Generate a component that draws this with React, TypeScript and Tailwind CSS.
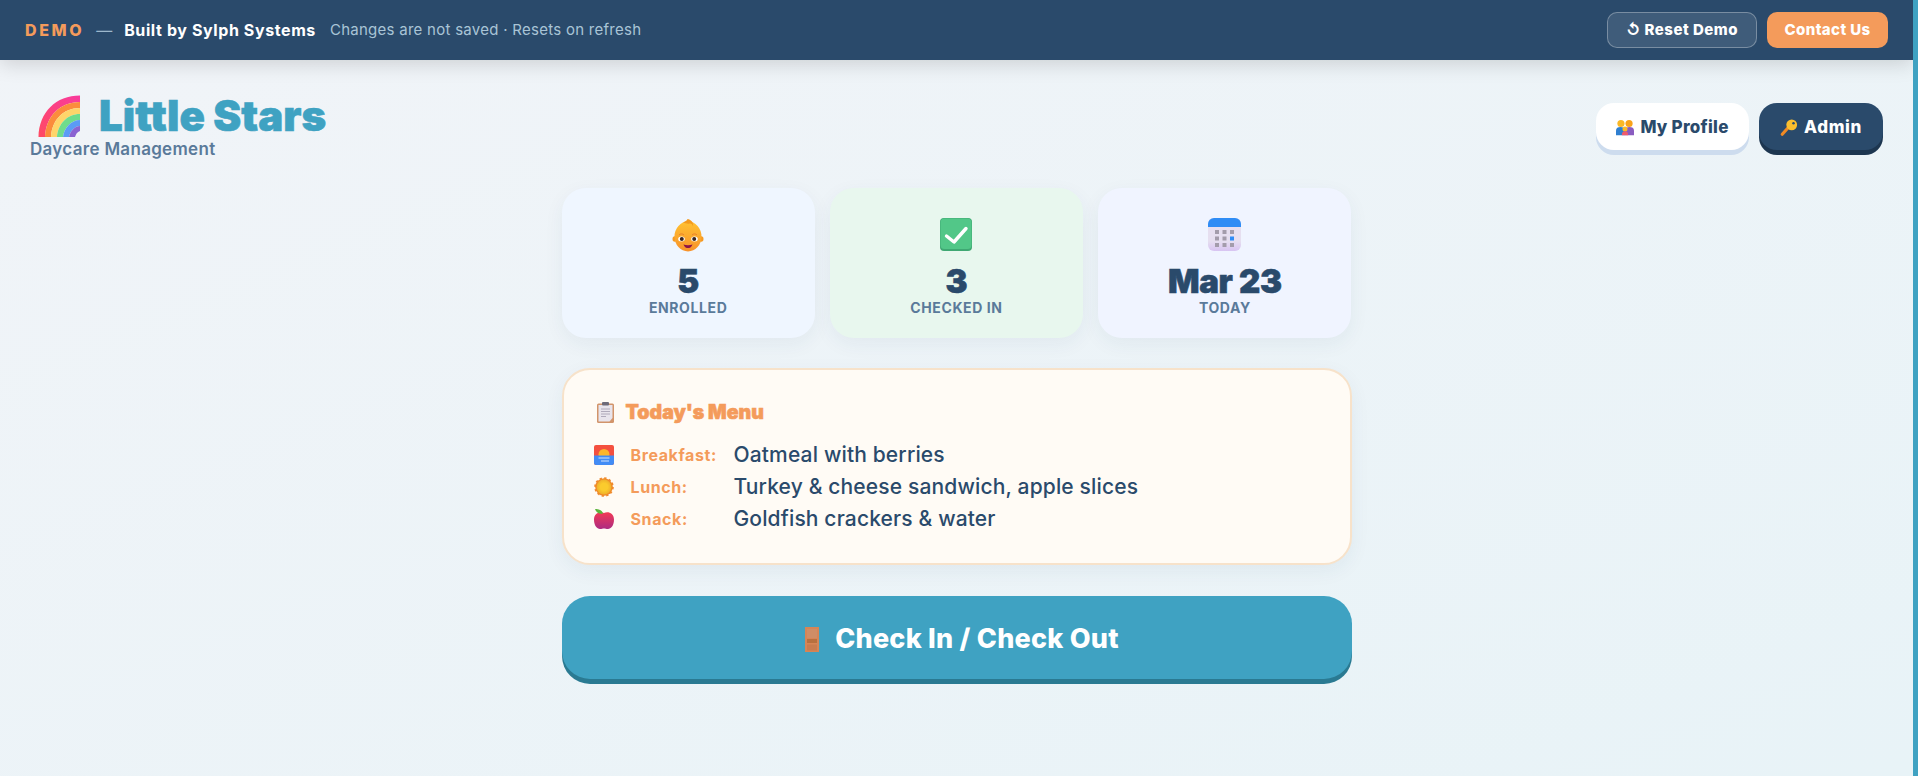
import React from "react";

const headFont = "font-['Inter',sans-serif] font-black [-webkit-text-stroke:0.6px_currentColor]";

const Rainbow = () => (
  <svg viewBox="0 0 42 42" className="w-[42px] h-[42px] shrink-0">
    <defs>
      <linearGradient id="rb" x1="1" y1="0" x2="0" y2="1">
        <stop offset="0" stopColor="#f83a9e" />
        <stop offset="1" stopColor="#ff4a62" />
      </linearGradient>
    </defs>
    <path d="M42 0.5C18 0.5 1 17 0.5 42H7C8 21 22 7 42 7Z" fill="url(#rb)" />
    <path d="M42 7C22 7 8 21 7 42H13C14 25 25 13 42 13Z" fill="#fb8c3c" />
    <path d="M42 13C25 13 14 25 13 42H19C20 29 29 19 42 19Z" fill="#ffd56a" />
    <path d="M42 19C29 19 20 29 19 42H25C26 33 33 25 42 25Z" fill="#6fdc8c" />
    <path d="M42 25C33 25 26 33 25 42H31C32 37 36 31 42 31Z" fill="#5b9bf5" />
    <path d="M42 31C36 31 32 37 31 42H37C38 39 39 37 42 36Z" fill="#8a63d2" />
  </svg>
);

const Couple = () => (
  <svg viewBox="0 0 20 20" className="w-[18px] h-[18px]">
    <circle cx="5.500" cy="5" r="4" fill="#fbb826" />
    <circle cx="14.500" cy="5" r="4" fill="#f9a21a" />
    <path d="M0 18v-5c0-3 2-4 5-4s5 1 5 4v5Z" fill="#2f7fd0" />
    <path d="M10 18v-5c0-3 2-4 5-4s5 1 5 4v5Z" fill="#8a5cc0" />
    <circle cx="10" cy="11" r="2.800" fill="#fbb826" />
    <path d="M6.500 18c0-3 1-4.500 3.500-4.500s3.500 1.500 3.500 4.500Z" fill="#ef5b6e" />
  </svg>
);

const Key = () => (
  <svg viewBox="0 0 20 20" className="w-[18px] h-[18px]">
    <path d="M10.500 8 2.500 17" stroke="#f08a24" strokeWidth="3.500" strokeLinecap="round" />
    <circle cx="13" cy="6.500" r="6" fill="#fcbf2d" />
    <circle cx="15" cy="4.800" r="1.400" fill="#2a4a6b" />
  </svg>
);

const Baby = () => (
  <svg viewBox="0 0 32 34" className="w-8 h-[34px]">
    <defs>
      <linearGradient id="babyFace" x1="0" y1="0" x2="0" y2="1">
        <stop offset="0" stopColor="#ffc132" />
        <stop offset="1" stopColor="#f8922a" />
      </linearGradient>
    </defs>
    <ellipse cx="2.800" cy="21" rx="2.300" ry="2.800" fill="#f59a23" />
    <ellipse cx="29.200" cy="21" rx="2.300" ry="2.800" fill="#f59a23" />
    <ellipse cx="16" cy="18.500" rx="13.500" ry="15" fill="url(#babyFace)" />
    <path d="M11 4.500C14 3 15 2.500 15.500 1c3 .5 6.500 3 5.500 7.500-.5-2.500-2-3.500-3.500-3-1.500.5-4 0-6.500-1Z" fill="#f39a1f" />
    <path d="M7 17c1.500-1.500 3.500-1.500 5 0M20 17c1.500-1.500 3.500-1.500 5 0" fill="none" stroke="#e67c2a" strokeWidth="0.900" />
    <ellipse cx="9.500" cy="21" rx="3.300" ry="2.500" fill="#fff" />
    <ellipse cx="22.500" cy="21" rx="3.300" ry="2.500" fill="#fff" />
    <circle cx="9.800" cy="21" r="2" fill="#3a2520" />
    <circle cx="22.200" cy="21" r="2" fill="#3a2520" />
    <path d="M11.500 26.500c2.500 1 6.500 1 9 0-1 3-3 3.500-4.500 3.500s-3.500-.5-4.500-3.500Z" fill="#8e1446" />
  </svg>
);

const Check = () => (
  <svg viewBox="0 0 32 33" className="w-8 h-[33px]">
    <rect width="32" height="33" rx="4" fill="#3fa873" />
    <rect x="0.500" y="0.500" width="31" height="30.500" rx="4" fill="#52c788" />
    <path d="M6.500 18 14 24 26 10.500" fill="none" stroke="#fff" strokeWidth="3.400" strokeLinecap="round" strokeLinejoin="round" />
  </svg>
);

const Calendar = () => (
  <svg viewBox="0 0 33 33" className="w-[33px] h-[33px]">
    <defs>
      <linearGradient id="calBody" x1="0" y1="0" x2="0" y2="1">
        <stop offset="0.700" stopColor="#e6dff0" />
        <stop offset="1" stopColor="#d8c4f2" />
      </linearGradient>
    </defs>
    <rect width="33" height="33" rx="6" fill="url(#calBody)" />
    <path d="M0 9V6a6 6 0 0 1 6-6h21a6 6 0 0 1 6 6v3Z" fill="#2f8cf5" />
    {[7, 14.500, 22].map((x) =>
      [12, 18.500, 25].map((y) => (
        <rect key={`${x}-${y}`} x={x} y={y} width="4" height="4" fill={x === 22 && y === 18.500 ? "#2f8cf5" : "#a39cab"} />
      )),
    )}
  </svg>
);

const Clipboard = () => (
  <svg viewBox="0 0 17 21" className="w-[17px] h-[21px]">
    <rect x="0" y="1.500" width="17" height="19.500" rx="1.500" fill="#d2946a" />
    <path d="M1.500 3h14v13l-3 3.500h-11Z" fill="#e8e4ec" />
    <rect x="5" y="0" width="7" height="3.500" rx="1" fill="#6d6a78" />
    <path d="M4 7h9M4 9.500h9M4 12h9M4 14.500h5" stroke="#a9a3b5" strokeWidth="0.900" />
  </svg>
);

const Sunrise = () => (
  <svg viewBox="0 0 20 20" className="w-5 h-5">
    <rect width="20" height="20" rx="2" fill="#f4503f" />
    <circle cx="10" cy="9.500" r="5.500" fill="#fcb62b" />
    <path d="M0 10.500h20V18a2 2 0 0 1-2 2H2a2 2 0 0 1-2-2Z" fill="#428cf5" />
    <path d="M4.500 13h11M7 16h8" stroke="#cfe2fc" strokeWidth="1" />
  </svg>
);

const Sun = () => (
  <svg viewBox="0 0 20 20" className="w-5 h-5">
    <defs>
      <radialGradient id="sunCore">
        <stop offset="0.500" stopColor="#fbcb2d" />
        <stop offset="1" stopColor="#efb02b" />
      </radialGradient>
    </defs>
    <circle cx="10" cy="10" r="8.800" fill="#f08a2a" stroke="#f08a2a" strokeWidth="2" strokeDasharray="2.300 2.300" />
    <circle cx="10" cy="10" r="7.400" fill="url(#sunCore)" />
  </svg>
);

const Apple = () => (
  <svg viewBox="0 0 20 20" className="w-5 h-5">
    <defs>
      <linearGradient id="appleBody" x1="0" y1="0" x2="0" y2="1">
        <stop offset="0" stopColor="#f23a55" />
        <stop offset="1" stopColor="#ad2b82" />
      </linearGradient>
    </defs>
    <path d="M10 4c3-1.800 10-1 10 6.500 0 6-3 9.500-6 9.500-2 0-2.500-.5-4-.5S8 20 6 20c-3 0-6-3.500-6-9.500C0 3 7 2.200 10 4Z" fill="url(#appleBody)" />
    <path d="M1 0c3.500 0 7 1 8 4.500C6 5.500 2 4 1 0Z" fill="#5ab53c" />
  </svg>
);

const Door = () => (
  <svg viewBox="0 0 14 25" className="w-[14px] h-[25px]">
    <rect width="14" height="25" fill="#d68556" />
    <rect x="2" y="2" width="10" height="9" fill="#cf8d66" />
    <rect x="2" y="12" width="10" height="4" fill="#b8703f" />
    <rect x="2" y="17.500" width="10" height="6" fill="#c97c4f" />
  </svg>
);

const stats = [
  { icon: <Baby />, value: "5", label: "ENROLLED", bg: "bg-[#eff6ff]" },
  { icon: <Check />, value: "3", label: "CHECKED IN", bg: "bg-[#e8f7ee]" },
  { icon: <Calendar />, value: "Mar 23", label: "TODAY", bg: "bg-[#f0f4ff]" },
];

const meals = [
  { icon: <Sunrise />, name: "Breakfast:", food: "Oatmeal with berries" },
  { icon: <Sun />, name: "Lunch:", food: "Turkey & cheese sandwich, apple slices" },
  { icon: <Apple />, name: "Snack:", food: "Goldfish crackers & water" },
];

export default function App() {
  return (
    <div className="flex h-screen overflow-hidden font-['Inter',sans-serif] text-[#2a4a6b]">
      <div className="flex-1 min-w-0 bg-gradient-to-br from-[#f1f4f8] to-[#e8f3f7]">
        <div className="flex items-center justify-between h-[60px] px-[25px] bg-[#2a4a6b] shadow-[0_4px_20px_rgba(0,0,0,0.15)]">
          <div className="flex items-center">
            <span className="text-[16px] font-extrabold tracking-[2.600px] text-[#f49b5b]">DEMO</span>
            <span className="ml-3 text-[#9db8cc]">—</span>
            <span className="ml-3 text-[16px] font-bold tracking-[0.6px] text-white">Built by Sylph Systems</span>
            <span className="ml-[14px] text-[15px] tracking-[0.27px] text-[#a9c4d6]">Changes are not saved · Resets on refresh</span>
          </div>
          <div className="flex items-center gap-[10px]">
            <button className="flex items-center justify-center w-[150px] h-9 rounded-[10px] border border-white/30 bg-white/10 text-[15px] font-extrabold tracking-[0.5px] text-white">↺ Reset Demo</button>
            <button className="w-[121px] h-9 rounded-[10px] bg-[#f49b5b] text-[15px] font-extrabold tracking-[0.4px] text-white">Contact Us</button>
          </div>
        </div>

        <div className="flex items-start justify-between pt-[35px] px-[30px]">
          <div>
            <div className="flex items-center gap-[19px] pl-2 h-[42px]">
              <Rainbow />
              <span className={`${headFont} text-[42px] leading-[42px] text-[#3fa2c2]`}>Little Stars</span>
            </div>
            <p className="text-[17px] font-semibold tracking-[0.3px] text-[#5a7a9a]">Daycare Management</p>
          </div>
          <div className="flex gap-[10px] pt-[8px]">
            <button className="flex items-center justify-center gap-[6px] w-[153px] h-[47px] pt-[2px] rounded-[18px] bg-white text-[17px] font-extrabold tracking-[0.25px] shadow-[0_5px_0_#cddcee]">
              <Couple /> My Profile
            </button>
            <button className="flex items-center justify-center gap-[6px] w-[124px] h-[47px] pt-[2px] rounded-[18px] bg-[#2a4a6b] text-[17px] font-extrabold tracking-[0.6px] text-white shadow-[0_5px_0_#1d3650]">
              <Key /> Admin
            </button>
          </div>
        </div>

        <div className="flex flex-col w-[790px] mx-auto mt-[25px]">
          <div className="grid grid-cols-3 gap-[15px]">
            {stats.map((s) => (
              <div key={s.label} className={`flex flex-col items-center h-[150px] pt-[30px] rounded-[24px] shadow-[0_6px_20px_rgba(42,74,107,0.06)] ${s.bg}`}>
                <div className="h-[34px]">{s.icon}</div>
                <div className={`${headFont} mt-[7px] text-[33px] leading-[44px] tracking-[-0.3px]`}>{s.value}</div>
                <div className="-mt-[6px] text-[14px] font-bold tracking-[0.6px] text-[#5a7a9a]">{s.label}</div>
              </div>
            ))}
          </div>

          <div className="mt-[30px] h-[197px] px-[30px] pt-[31px] rounded-[28px] border-2 border-[#f7e2ca] bg-[#fffbf5] shadow-[0_6px_20px_rgba(42,74,107,0.06)]">
            <div className="flex items-center gap-3 h-[24px] ml-[3px]">
              <Clipboard />
              <span className={`${headFont} text-[19.5px] text-[#f49b5b]`}>Today's Menu</span>
            </div>
            <div className="flex flex-col gap-[4px] mt-[16px]">
              {meals.map((m) => (
                <div key={m.name} className="flex items-center h-7">
                  <span className="w-[37px]">{m.icon}</span>
                  <span className="w-[103px] text-[16px] font-bold tracking-[0.6px] text-[#f49b5b]">{m.name}</span>
                  <span className="text-[21px] font-medium tracking-[0.15px]">{m.food}</span>
                </div>
              ))}
            </div>
          </div>

          <button className="flex items-center justify-center gap-[16px] mt-[31px] h-[83px] pt-[4px] pl-[11px] rounded-[28px] bg-[#3fa2c2] text-[27px] font-extrabold tracking-[0.25px] text-white shadow-[0_5px_0_#2a7a92]">
            <Door /> Check In / Check Out
          </button>
        </div>
      </div>
      <div className="w-[5px] shrink-0 bg-[#3fa2c2]" />
    </div>
  );
}
